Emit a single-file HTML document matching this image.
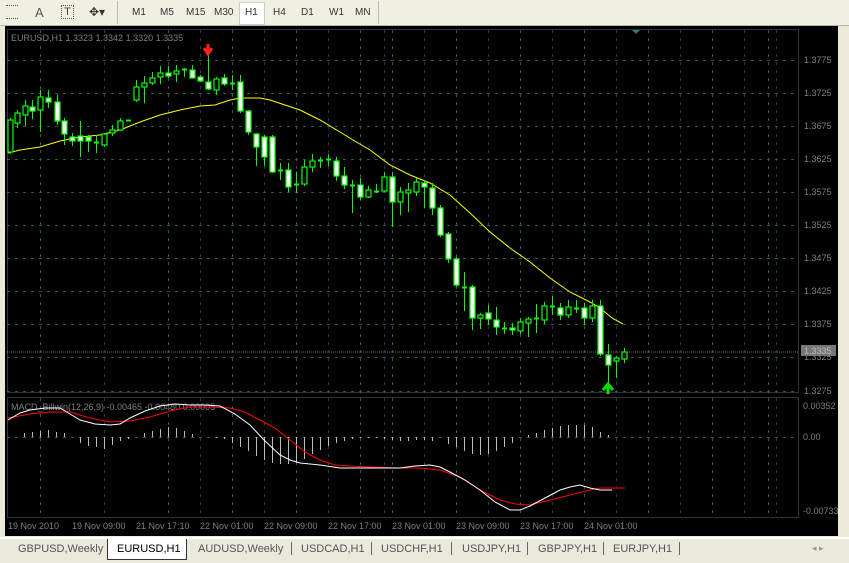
<!DOCTYPE html>
<html><head><meta charset="utf-8"><style>
html,body{margin:0;padding:0;width:849px;height:561px;overflow:hidden;background:#ece9d8;font-family:"Liberation Sans",sans-serif;}
#tb{position:absolute;left:0;top:0;width:849px;height:25px;background:#f1efe2;border-bottom:1px solid #b8b5a5;}
.tf{position:absolute;top:7px;font-size:10px;color:#333;}
#chart{position:absolute;left:5px;top:26px;width:833px;height:510px;background:#000;}
#tabs{position:absolute;left:0;top:537px;width:849px;height:24px;background:#ebe8dc;border-top:2px solid #fff;}
.tab{position:absolute;top:4px;font-size:11px;color:#555;}
.sep{position:absolute;top:3px;width:1px;height:13px;background:#666;}
</style></head><body>
<div id="tb">
<div style="position:absolute;left:6px;top:5px;width:12px;height:12px;border-top:1px dotted #555;border-bottom:1px dotted #555"></div>
<div class="tf" style="left:35px;top:5px;font-size:13px;color:#555">A</div>
<div style="position:absolute;left:61px;top:5px;width:11px;height:12px;border:1px dotted #555;font-size:11px;text-align:center;line-height:12px;color:#444">T</div>
<div class="tf" style="left:89px;top:5px;font-size:12px">✥▾</div>
<div style="position:absolute;left:117px;top:1px;width:1px;height:23px;background:#bbb"></div>
<div class="tf" style="left:132px">M1</div><div class="tf" style="left:160px">M5</div>
<div class="tf" style="left:186px">M15</div><div class="tf" style="left:214px">M30</div>
<div style="position:absolute;left:239px;top:2px;width:24px;height:21px;background:#fff;border:1px solid #ccc"></div>
<div class="tf" style="left:245px">H1</div><div class="tf" style="left:273px">H4</div>
<div class="tf" style="left:301px">D1</div><div class="tf" style="left:329px">W1</div><div class="tf" style="left:355px">MN</div>
<div style="position:absolute;left:378px;top:1px;width:1px;height:23px;background:#bbb"></div>
</div>
<div id="chart">
<svg id="s" width="833" height="510" viewBox="5 26 833 510" xmlns="http://www.w3.org/2000/svg" style="position:absolute;left:0;top:0">
<g font-family="Liberation Sans" font-size="9" fill="#7a8080">
<text x="11" y="41">EURUSD,H1  1.3323 1.3342 1.3320 1.3335</text>
<text x="11" y="410">MACD_Billwin(12,26,9) -0.00465 -0.00480 0.00005</text>
<text x="804" y="63">1.3775</text><text x="804" y="96">1.3725</text><text x="804" y="129">1.3675</text>
<text x="804" y="162">1.3625</text><text x="804" y="195">1.3575</text><text x="804" y="228">1.3525</text>
<text x="804" y="261">1.3475</text><text x="804" y="294">1.3425</text><text x="804" y="327">1.3375</text>
<text x="804" y="360">1.3325</text><text x="804" y="394">1.3275</text>
<text x="803" y="409">0.00352</text><text x="803" y="440">0.00</text><text x="803" y="514">-0.00733</text>
<text x="8" y="529">19 Nov 2010</text><text x="72" y="529">19 Nov 09:00</text><text x="136" y="529">21 Nov 17:10</text>
<text x="200" y="529">22 Nov 01:00</text><text x="264" y="529">22 Nov 09:00</text><text x="328" y="529">22 Nov 17:00</text>
<text x="392" y="529">23 Nov 01:00</text><text x="456" y="529">23 Nov 09:00</text><text x="520" y="529">23 Nov 17:00</text>
<text x="584" y="529">24 Nov 01:00</text>
</g>
<rect x="801" y="345" width="35" height="11" fill="#777"/>
<text x="804" y="354" font-family="Liberation Sans" font-size="9" fill="#bbb">1.3335</text>
<g id="grid" stroke-dasharray="3,5" stroke-width="1"></g>
<line x1="7" y1="352" x2="798" y2="352" stroke="#666" stroke-dasharray="1,1"/>
<rect x="7.5" y="29.5" width="791" height="363" fill="none" stroke="#666" stroke-dasharray="1,1"/>
<rect x="7.5" y="397.5" width="791" height="120" fill="none" stroke="#666" stroke-dasharray="1,1"/>
<polygon points="632,30 640,30 636,34" fill="#2a7a78"/>
<g id="hist" stroke="#bbb" stroke-width="1"></g>
<polyline fill="none" stroke="#ffff00" stroke-width="1" points="8,153 20,150 40,147 60,141 80,137 100,135 120,130 140,122 160,115 180,110 200,106 215,105 230,100 240,98 260,98 270,100 285,105 300,110 320,120 340,132 353,140 370,150 390,165 410,175 430,183 450,195 470,213 490,232 510,248 530,262 550,278 570,292 590,302 600,308 612,318 623,324"/>
<g id="cnd"></g>
<path d="M208,44 L208,54 M204,48 L208,54 L212,48" stroke="#ff2020" stroke-width="3" fill="none"/>
<path d="M608,394 L608,385 M603,390 L608,384 L613,390" stroke="#00e000" stroke-width="3" fill="none"/>
<polyline fill="none" stroke="#ff0000" stroke-width="1" points="8,418 30,414 50,412 70,412 90,418 110,422 130,421 150,417 170,411 190,407 210,407 230,408 245,412 260,420 275,428 290,440 305,452 320,460 335,465 350,466 370,467 400,468 420,468 440,470 460,477 480,490 500,500 515,504 530,505 550,500 570,495 590,490 600,488 625,488"/>
<polyline fill="none" stroke="#ffffff" stroke-width="1" points="8,420 20,413 30,410 45,408 60,408 70,414 80,420 95,424 110,425 120,424 130,418 145,411 160,406 175,404 190,405 205,405 220,406 235,414 250,425 265,441 280,455 290,460 300,463 320,465 340,468 370,468 400,468 415,466 430,465 440,467 450,472 465,480 480,490 495,502 510,510 520,510 530,506 545,498 560,490 570,487 580,485 590,488 600,490 612,490"/>
</svg>
</div>
<div id="tabs">
<div class="tab" style="left:18px">GBPUSD,Weekly</div>
<div style="position:absolute;left:107px;top:0;width:78px;height:20px;background:#fff;border:1px solid #333;border-top:none"></div>
<div class="tab" style="left:117px;color:#000">EURUSD,H1</div>
<div class="tab" style="left:198px">AUDUSD,Weekly</div><div class="sep" style="left:291px"></div>
<div class="tab" style="left:301px">USDCAD,H1</div><div class="sep" style="left:371px"></div>
<div class="tab" style="left:381px">USDCHF,H1</div><div class="sep" style="left:451px"></div>
<div class="tab" style="left:462px">USDJPY,H1</div><div class="sep" style="left:527px"></div>
<div class="tab" style="left:538px">GBPJPY,H1</div><div class="sep" style="left:603px"></div>
<div class="tab" style="left:613px">EURJPY,H1</div><div class="sep" style="left:679px"></div>
<div class="tab" style="left:812px;color:#999;font-size:9px">◂ ▸</div>
</div>
<script>
var NS="http://www.w3.org/2000/svg";
function el(p,t,a){var e=document.createElementNS(NS,t);for(var k in a)e.setAttribute(k,a[k]);p.appendChild(e);return e;}
var g=document.getElementById("grid");
var vx=[40,104,168,200,232,264,296,328,360,384,392,424,456,488,520,552,584,616,648,680,712,744,768,776];
vx.forEach(function(x,i){el(g,"line",{x1:x+.5,y1:30,x2:x+.5,y2:517,stroke:i%2?"#33335a":"#285a58"});});
[60,93,126,159,192,225,258,291,324,357,391].forEach(function(y){el(g,"line",{x1:7,y1:y+.5,x2:798,y2:y+.5,stroke:"#285a58"});});
el(g,"line",{x1:7,y1:437.5,x2:798,y2:437.5,stroke:"#285a58"});
var C=[[10,152,120,118,154],[17,123,113,110,128],[25,115,106,100,126],[32,107,111,100,119],[40,110,97,90,132],[48,98,102,90,108],[57,102,121,95,125],[64,121,134,118,145],[72,137,141,133,146],[80,136,141,121,157],[88,137,141,135,152],[96,142,142,135,153],[104,145,134,133,147],[112,133,130,125,136],[120,130,121,118,131],[128,120,120,120,120],[136,100,87,80,102],[144,87,83,76,103],[152,83,78,72,85],[160,77,73,66,84],[168,73,76,66,78],[176,74,71,65,82],[184,69,69,68,77],[192,70,78,65,78],[200,77,81,75,82],[208,82,89,46,90],[216,90,79,77,95],[224,78,84,74,86],[232,83,84,75,90],[240,82,111,75,113],[248,111,132,110,135],[256,134,147,133,166],[264,137,157,135,166],[272,137,172,135,173],[280,170,170,163,180],[288,170,187,163,192],[296,184,184,172,193],[304,184,167,160,186],[312,167,161,154,172],[320,160,160,157,168],[328,159,159,154,166],[336,161,176,157,181],[344,176,185,167,189],[352,185,185,180,213],[360,185,197,178,200],[368,197,190,186,198],[376,191,191,184,193],[384,191,177,172,192],[392,177,202,172,227],[400,202,192,187,215],[408,193,190,183,212],[416,192,182,178,196],[424,183,187,180,208],[432,188,208,183,215],[440,208,235,205,237],[448,234,259,232,263],[456,259,285,257,287],[464,287,287,272,311],[472,287,318,285,330],[480,318,315,313,329],[488,313,319,305,325],[496,320,327,307,335],[504,328,328,322,334],[512,328,330,323,335],[520,331,322,318,334],[528,323,319,317,337],[536,318,318,304,333],[544,320,306,302,324],[552,306,306,296,315],[560,308,315,303,320],[568,315,307,300,318],[576,308,308,300,313],[584,308,318,303,325],[592,318,306,300,322],[600,306,354,300,356],[608,355,365,344,385],[616,361,358,356,378],[624,359,352,348,363]];
var cg=document.getElementById("cnd");
C.forEach(function(c){var x=c[0],t=Math.min(c[1],c[2]),b=Math.max(c[1],c[2]);
el(cg,"line",{x1:x+.5,y1:c[3],x2:x+.5,y2:c[4],stroke:"#00ff00","stroke-width":1});
if(b-t<2){el(cg,"line",{x1:x-2,y1:t+.5,x2:x+3,y2:t+.5,stroke:"#00ff00","stroke-width":2});}
else el(cg,"rect",{x:x-2,y:t,width:5,height:b-t,fill:c[2]>c[1]?"#fff":"#000",stroke:"#00ff00","stroke-width":1.2});});
var h=document.getElementById("hist");
var H=[[24,-4],[32,-5],[40,-6],[48,-7],[56,-5],[64,-4],[80,6],[88,9],[96,10],[104,12],[112,8],[120,4],[128,2],[144,-4],[152,-6],[160,-8],[168,-10],[176,-9],[184,-6],[192,-3],[216,1],[224,2],[232,6],[240,10],[248,14],[256,19],[264,23],[272,26],[280,27],[288,27],[296,26],[304,22],[312,17],[320,13],[328,9],[336,6],[344,4],[352,2],[360,1],[368,1],[376,1],[384,2],[392,3],[400,4],[408,4],[416,3],[424,3],[432,4],[448,7],[456,10],[464,14],[472,17],[480,18],[488,17],[496,14],[504,10],[512,6],[528,-2],[536,-4],[544,-7],[552,-9],[560,-11],[568,-12],[576,-12],[584,-12],[592,-10],[600,-5],[608,-2]];
H.forEach(function(v){el(h,"line",{x1:v[0]+.5,y1:437,x2:v[0]+.5,y2:437+v[1]});});
</script>
</body></html>
